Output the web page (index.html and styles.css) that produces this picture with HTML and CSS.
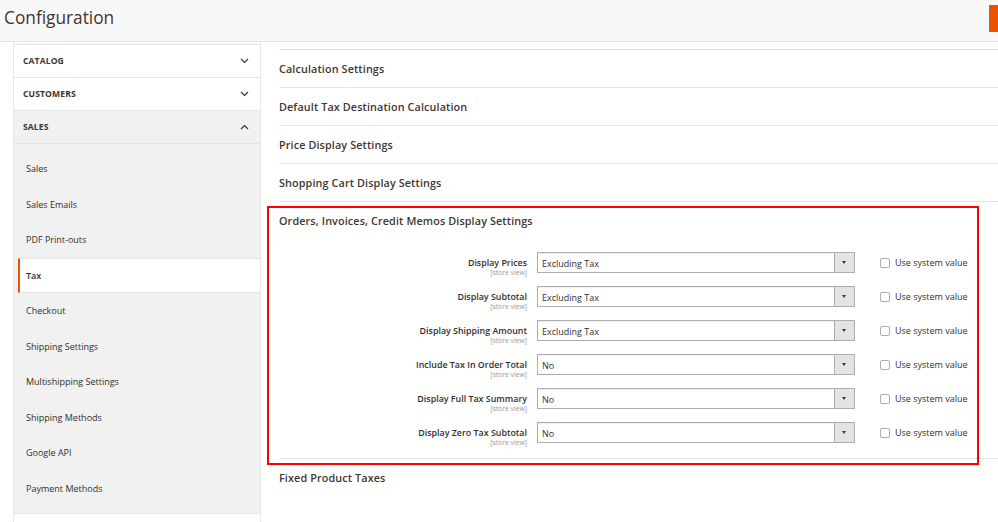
FILE: index.html
```html
<!DOCTYPE html>
<html>
<head>
<meta charset="utf-8">
<link rel="stylesheet" href="styles.css">
</head>
<body>
<header class="page-header">
  <h1 class="page-title">Configuration</h1>
  <span class="save-btn"></span>
</header>
<div class="page-main">
  <nav class="sidebar">
    <div class="nav-top"></div>
    <div class="nav-group">
      <span>CATALOG</span>
      <svg class="chev" width="9" height="6" viewBox="0 0 9 6"><path d="M1 1 L4.5 4.5 L8 1" fill="none" stroke="#41362f" stroke-width="1.2"/></svg>
    </div>
    <div class="nav-group">
      <span>CUSTOMERS</span>
      <svg class="chev" width="9" height="6" viewBox="0 0 9 6"><path d="M1 1 L4.5 4.5 L8 1" fill="none" stroke="#41362f" stroke-width="1.2"/></svg>
    </div>
    <div class="nav-group nav-open">
      <span>SALES</span>
      <svg class="chev" width="9" height="6" viewBox="0 0 9 6"><path d="M1 5 L4.5 1.5 L8 5" fill="none" stroke="#41362f" stroke-width="1.2"/></svg>
    </div>
    <ul class="nav-sub">
      <li class="nav-item">Sales</li>
      <li class="nav-item">Sales Emails</li>
      <li class="nav-item">PDF Print-outs</li>
      <li class="nav-item nav-active">Tax</li>
      <li class="nav-item">Checkout</li>
      <li class="nav-item">Shipping Settings</li>
      <li class="nav-item">Multishipping Settings</li>
      <li class="nav-item">Shipping Methods</li>
      <li class="nav-item">Google API</li>
      <li class="nav-item">Payment Methods</li>
    </ul>
    <div class="nav-bottom"></div>
  </nav>
  <main class="content">
    <section class="section"><h2 class="section-title">Calculation Settings</h2></section>
    <section class="section"><h2 class="section-title">Default Tax Destination Calculation</h2></section>
    <section class="section"><h2 class="section-title">Price Display Settings</h2></section>
    <section class="section"><h2 class="section-title">Shopping Cart Display Settings</h2></section>
    <section class="section section-open">
      <h2 class="section-title">Orders, Invoices, Credit Memos Display Settings</h2>
      <div class="form">
        <div class="row">
          <label class="field-label"><span class="name">Display Prices</span><span class="scope">[store view]</span></label>
          <div class="select"><span class="value">Excluding Tax</span><span class="arrow"></span></div>
          <div class="sys"><span class="check"></span><span class="sys-label">Use system value</span></div>
        </div>
        <div class="row">
          <label class="field-label"><span class="name">Display Subtotal</span><span class="scope">[store view]</span></label>
          <div class="select"><span class="value">Excluding Tax</span><span class="arrow"></span></div>
          <div class="sys"><span class="check"></span><span class="sys-label">Use system value</span></div>
        </div>
        <div class="row">
          <label class="field-label"><span class="name">Display Shipping Amount</span><span class="scope">[store view]</span></label>
          <div class="select"><span class="value">Excluding Tax</span><span class="arrow"></span></div>
          <div class="sys"><span class="check"></span><span class="sys-label">Use system value</span></div>
        </div>
        <div class="row">
          <label class="field-label"><span class="name">Include Tax In Order Total</span><span class="scope">[store view]</span></label>
          <div class="select"><span class="value">No</span><span class="arrow"></span></div>
          <div class="sys"><span class="check"></span><span class="sys-label">Use system value</span></div>
        </div>
        <div class="row">
          <label class="field-label"><span class="name">Display Full Tax Summary</span><span class="scope">[store view]</span></label>
          <div class="select"><span class="value">No</span><span class="arrow"></span></div>
          <div class="sys"><span class="check"></span><span class="sys-label">Use system value</span></div>
        </div>
        <div class="row">
          <label class="field-label"><span class="name">Display Zero Tax Subtotal</span><span class="scope">[store view]</span></label>
          <div class="select"><span class="value">No</span><span class="arrow"></span></div>
          <div class="sys"><span class="check"></span><span class="sys-label">Use system value</span></div>
        </div>
      </div>
    </section>
    <section class="section"><h2 class="section-title">Fixed Product Taxes</h2></section>
    <div class="highlight"></div>
  </main>
</div>
</body>
</html>
```

FILE: styles.css
```css
* { box-sizing: border-box; }
html, body { margin: 0; padding: 0; }
body {
  font-family: "Open Sans", "Liberation Sans", sans-serif;
  color: #41362f;
  background: #fff;
  width: 998px;
  height: 522px;
  overflow: hidden;
}
.page-header {
  height: 42px;
  background: #f8f8f8;
  border-bottom: 1px solid #e3e3e3;
  display: flex;
  align-items: flex-start;
}
.page-title {
  margin: 0;
  padding: 5px 0 0 4px;
  font-size: 17.3px;
  font-weight: 400;
  line-height: 26px;
  color: #41362f;
}
.save-btn {
  margin-left: auto;
  margin-top: 5px;
  width: 9px;
  height: 27px;
  background: #eb5202;
}
.page-main {
  display: flex;
  align-items: flex-start;
}
.sidebar {
  margin-left: 13px;
  width: 248px;
  border-left: 1px solid #e8e8e8;
  border-right: 1px solid #e8e8e8;
}
.nav-top {
  height: 3px;
  border-bottom: 1px solid #e3e3e3;
}
.nav-group {
  height: 33px;
  border-bottom: 1px solid #e3e3e3;
  display: flex;
  align-items: center;
  justify-content: space-between;
  padding: 0 11px 0 9px;
  font-size: 8.6px;
  font-weight: 700;
  letter-spacing: 0.1px;
  color: #41362f;
}
.nav-open { background: #f1f1f1; }
.chev { display: block; }
.nav-sub {
  list-style: none;
  margin: 0;
  padding: 7px 0 7px;
  background: #f1f1f1;
  border-bottom: 1px solid #e3e3e3;
}
.nav-item {
  height: 35.5px;
  display: flex;
  align-items: center;
  padding-left: 12px;
  font-size: 9px;
  color: #303030;
}
.nav-active {
  margin-left: 4px;
  padding-left: 6px;
  background: #fff;
  border-left: 2px solid #eb5202;
  border-top: 1px solid #e3e3e3;
  border-bottom: 1px solid #e3e3e3;
  font-weight: 600;
  color: #303030;
}
.nav-bottom { height: 12px; }
.content {
  flex: 1;
  position: relative;
  padding: 7px 0 0 18px;
}
.section {
  border-top: 1px solid #e3e3e3;
}
.section-title {
  margin: 0;
  height: 37px;
  display: flex;
  align-items: center;
  font-size: 10.8px;
  font-weight: 600;
  letter-spacing: 0.12px;
  color: #41362f;
}
.section-open .section-title { height: 37px; }
.form {
  padding: 13px 0 15px;
  display: flex;
  flex-direction: column;
  gap: 13px;
}
.row {
  display: grid;
  grid-template-columns: 248px 318px auto;
  column-gap: 10px;
  align-items: start;
  height: 21px;
}
.field-label {
  display: flex;
  flex-direction: column;
  align-items: flex-end;
  padding-top: 5px;
}
.name {
  font-size: 8.9px;
  font-weight: 600;
  line-height: 12px;
  color: #303030;
}
.scope {
  font-size: 6.8px;
  line-height: 8px;
  color: #999;
}
.select {
  height: 21px;
  border: 1px solid #adadad;
  background: #fff;
  display: flex;
  align-items: center;
  box-shadow: inset 0 1px 0 #f0f0f0;
}
.value {
  flex: 1;
  padding-left: 4px;
  padding-top: 1px;
  font-size: 9px;
  color: #303030;
}
.arrow {
  width: 20px;
  height: 19px;
  background: #e3e3e3;
  border-left: 1px solid #adadad;
  position: relative;
}
.arrow::after {
  content: "";
  position: absolute;
  left: 7px;
  top: 8px;
  border-left: 2.5px solid transparent;
  border-right: 2.5px solid transparent;
  border-top: 3px solid #41362f;
}
.sys {
  display: flex;
  align-items: center;
  gap: 5px;
  margin-left: 15px;
  height: 21px;
}
.check {
  width: 10px;
  height: 10px;
  border: 1px solid #adadad;
  border-radius: 2px;
  background: #fff;
}
.sys-label {
  font-size: 9px;
  color: #303030;
}
.highlight {
  position: absolute;
  left: 6px;
  top: 164px;
  width: 712px;
  height: 259px;
  border: 2px solid #f00;
  pointer-events: none;
}
```
